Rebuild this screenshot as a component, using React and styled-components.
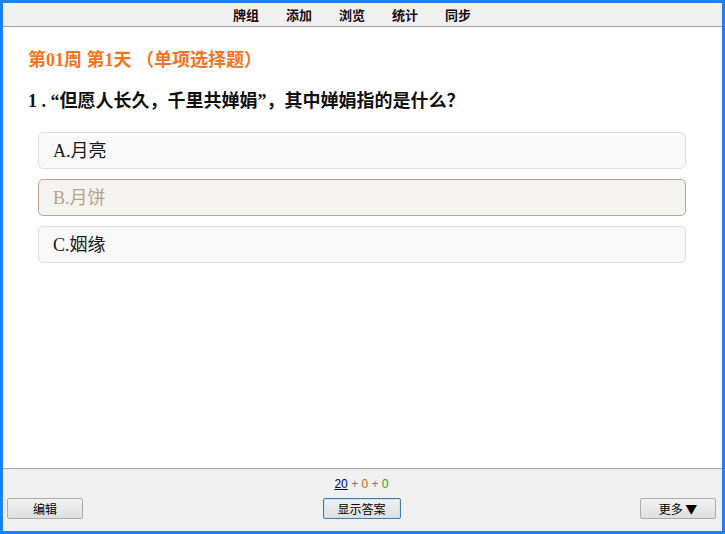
import styled, { createGlobalStyle } from "styled-components";

const Global = createGlobalStyle`
    html, body {
        margin: 0;
        padding: 0;
        background: #ffffff;
    }
    * {
        box-sizing: border-box;
    }
`

const menu = ["牌组", "添加", "浏览", "统计", "同步"];

const options = [
    { label: "A.月亮", picked: false },
    { label: "B.月饼", picked: true },
    { label: "C.姻缘", picked: false },
];

export default function App(){
    return (
        <>
            <Global />
            <Frame>
                <TopBar>
                    {menu.map((m) => (
                        <MenuItem key={m}>{m}</MenuItem>
                    ))}
                </TopBar>
                <Content>
                    <Title>第01周 第1天 （单项选择题）</Title>
                    <Question>1 . “但愿人长久，千里共婵娟”，其中婵娟指的是什么？</Question>
                    <Options>
                        {options.map((o) => (
                            <Option key={o.label} $picked={o.picked}>{o.label}</Option>
                        ))}
                    </Options>
                </Content>
                <BottomBar>
                    <Counter>
                        <Due>20</Due>
                        <Plus> + </Plus>
                        <Learn>0</Learn>
                        <Plus> + </Plus>
                        <Review>0</Review>
                    </Counter>
                    <Buttons>
                        <Button>编辑</Button>
                        <Button $focus>显示答案</Button>
                        <Button>更多 ▼</Button>
                    </Buttons>
                </BottomBar>
            </Frame>
        </>
    );
}

const Frame = styled.div`
    width: 725px;
    height: 534px;
    border: 3px solid #1c80ff;
    display: flex;
    flex-direction: column;
    background: #ffffff;
`

const TopBar = styled.div`
    height: 24px;
    background-color: #f0f0f0;
    border-bottom: 1px solid #a5a5a5;
    display: flex;
    justify-content: center;
    align-items: center;
    gap: 27px;
    padding-right: 21px;
`

const MenuItem = styled.span`
    font-family: "Noto Sans CJK SC", sans-serif;
    font-size: 13px;
    font-weight: 700;
    color: #1a0a10;
    width: 26px;
    text-align: center;
`

const Content = styled.div`
    flex: 1;
    padding: 21px 36px 0 25px;
`

const Title = styled.div`
    font-family: "Liberation Serif", "Noto Sans CJK SC", serif;
    font-size: 18px;
    font-weight: 700;
    line-height: 24px;
    color: #f4731c;
`

const Question = styled.div`
    margin-top: 17px;
    font-family: "Liberation Serif", "Noto Sans CJK SC", serif;
    font-size: 18px;
    font-weight: 700;
    line-height: 24px;
    color: #111111;
`

const Options = styled.div`
    margin-top: 19px;
    margin-left: 10px;
    display: flex;
    flex-direction: column;
    gap: 10px;
`

const Option = styled.div`
    height: 37px;
    border: 1px solid ${(p) => (p.$picked ? "#bba58e" : "#dedede")};
    border-radius: 5px;
    background-color: ${(p) => (p.$picked ? "#f5f3ef" : "#f9f9f9")};
    color: ${(p) => (p.$picked ? "#b5a28f" : "#1a1a1a")};
    font-family: "Liberation Serif", "Noto Sans CJK SC", serif;
    font-size: 18px;
    display: flex;
    align-items: center;
    padding: 0 0 3px 14px;
`

const BottomBar = styled.div`
    height: 63px;
    background-color: #f0f0f0;
    border-top: 1px solid #a5a5a5;
    display: flex;
    flex-direction: column;
    padding: 7px 6px 0 4px;
`

const Counter = styled.div`
    text-align: center;
    font-family: "Liberation Sans", "Noto Sans", sans-serif;
    font-size: 12px;
    line-height: 16px;
`

const Due = styled.span`
    color: #000080;
    text-decoration: underline;
`

const Plus = styled.span`
    color: #777777;
`

const Learn = styled.span`
    color: #c8642c;
`

const Review = styled.span`
    color: #22a022;
`

const Buttons = styled.div`
    margin-top: 6px;
    display: flex;
    justify-content: space-between;
    align-items: center;
`

const Button = styled.button`
    width: ${(p) => (p.$focus ? "78px" : "76px")};
    height: 21px;
    padding: 0;
    border: 1px solid ${(p) => (p.$focus ? "#3c7fb1" : "#acacac")};
    border-radius: 2px;
    background: linear-gradient(#f2f2f2, #dedede);
    box-shadow: ${(p) => (p.$focus ? "inset 0 0 0 1px #c6e2f7" : "none")};
    font-family: "Noto Sans CJK SC", sans-serif;
    font-size: 12px;
    line-height: 19px;
    color: #000000;
`
